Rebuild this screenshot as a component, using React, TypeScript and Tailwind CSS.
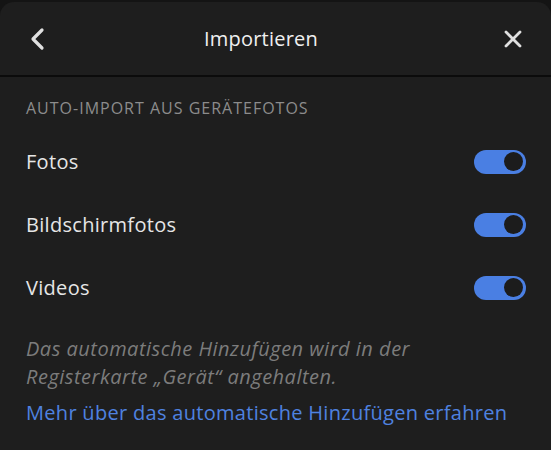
import React from "react";

function Toggle() {
  return (
    <div className="w-[52px] h-[24px] rounded-full bg-[#4a7fe3] flex items-center justify-end pr-[3px]">
      <div className="w-[19px] h-[19px] rounded-full bg-[#1c1c1c]" />
    </div>
  );
}

function Row({ label }: { label: string }) {
  return (
    <div className="flex items-center justify-between h-[63px] pl-[26px] pr-[25px]">
      <span className="text-[20px] tracking-[0.3px] text-[#e6e6e6]">{label}</span>
      <Toggle />
    </div>
  );
}

export default function App() {
  return (
    <div
      className="w-[551px] h-[450px] bg-[#141414] overflow-hidden"
      style={{ fontFamily: '"Open Sans", "Noto Sans", sans-serif' }}
    >
      <div className="mt-[2px] h-[448px] bg-[#1e1e1e] rounded-t-[14px] flex flex-col">
        <div className="h-[73px] flex items-center justify-between px-[26px] relative">
          <svg width="20" height="24" viewBox="0 0 20 24" className="ml-[1px]">
            <path d="M15 3 L6 12 L15 21" fill="none" stroke="#e0e0e0" strokeWidth="3.2" strokeLinecap="round" strokeLinejoin="round" />
          </svg>
          <span className="absolute left-0 right-0 pr-[29px] text-center text-[20px] tracking-[0.2px] text-[#f0f0f0] pointer-events-none">Importieren</span>
          <svg width="18" height="18" viewBox="0 0 18 18" className="mr-[3px]">
            <path d="M2 2 L16 16 M16 2 L2 16" fill="none" stroke="#e0e0e0" strokeWidth="2.8" strokeLinecap="round" />
          </svg>
        </div>
        <div className="h-[2px] bg-[#0b0b0b]" />
        <div className="pt-[19px] pl-[26px] text-[16px] text-[#8c8c8c] tracking-[1px]">AUTO-IMPORT AUS GERÄTEFOTOS</div>
        <div className="mt-[10px]">
          <Row label="Fotos" />
          <Row label="Bildschirmfotos" />
          <Row label="Videos" />
        </div>
        <div className="pl-[26px] pr-[20px] mt-[16px] italic text-[20px] tracking-[0.5px] leading-[28px] text-[#7c7c7c]">
          Das automatische Hinzufügen wird in der
          <br />
          Registerkarte „Gerät“ angehalten.
        </div>
        <div className="pl-[26px] mt-[7px] text-[20px] tracking-[0.3px] text-[#4f82e0]">
          Mehr über das automatische Hinzufügen erfahren
        </div>
      </div>
    </div>
  );
}
